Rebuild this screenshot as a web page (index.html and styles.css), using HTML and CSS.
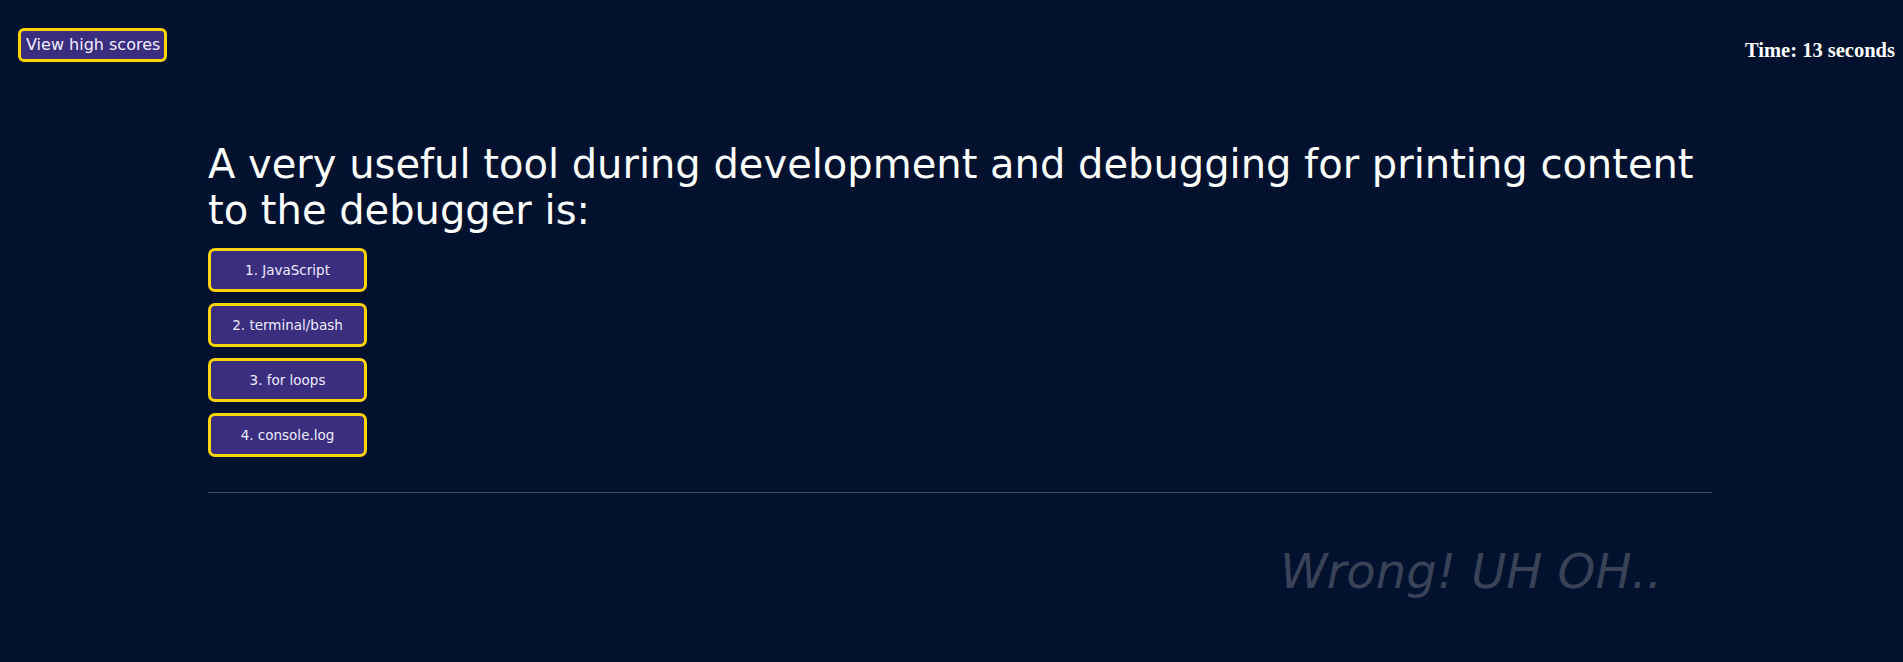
FILE: index.html
```html
<!DOCTYPE html>
<html lang="en">
<head>
<meta charset="utf-8">
<title>Code Quiz</title>
<link rel="stylesheet" href="styles.css">
</head>
<body>
<header class="top-bar">
  <button class="scores-btn">View high scores</button>
  <div class="timer">Time: 13 seconds</div>
</header>
<main class="quiz">
  <h1 class="question">A very useful tool during development and debugging for printing content to the debugger is:</h1>
  <div class="choices">
    <button class="choice">1. JavaScript</button>
    <button class="choice">2. terminal/bash</button>
    <button class="choice">3. for loops</button>
    <button class="choice">4. console.log</button>
  </div>
  <hr class="divider">
  <div class="feedback">
    <p class="feedback-text">Wrong! UH OH..</p>
  </div>
</main>
</body>
</html>
```
FILE: styles.css
```css
html, body {
  background: #01112e;
}
body {
  margin: 8px;
  font-family: "DejaVu Sans", Verdana, sans-serif;
  color: #ffffff;
  overflow: hidden;
}
.top-bar {
  display: flex;
  justify-content: space-between;
  align-items: flex-start;
  padding: 20px 0 0 10px;
}
.scores-btn {
  font-family: "DejaVu Sans", Verdana, sans-serif;
  font-size: 16px;
  line-height: 18px;
  color: #f1efff;
  background: #3b2e7e;
  border: 3px solid #ffd500;
  border-radius: 6px;
  padding: 5px 4px 5px 5px;
  cursor: pointer;
}
.timer {
  flex-shrink: 0;
  font-family: "Liberation Serif", "Times New Roman", serif;
  font-weight: bold;
  font-size: 20.5px;
  line-height: 23px;
  margin-top: 11px;
  white-space: nowrap;
}
.quiz {
  margin: 0 183px 0 200px;
  padding-top: 79px;
}
.question {
  font-size: 40px;
  font-weight: normal;
  line-height: 46px;
  margin: 0 0 15px 0;
}
.choices {
  display: flex;
  flex-direction: column;
  align-items: flex-start;
  gap: 11px;
}
.choice {
  width: 159px;
  font-family: "DejaVu Sans", Verdana, sans-serif;
  font-size: 13.5px;
  line-height: 16px;
  padding: 11px 4px;
  color: #eeecff;
  background: #3b2e7e;
  border: 3px solid #ffd500;
  border-radius: 7px;
  cursor: pointer;
}
.divider {
  border: none;
  border-top: 1px solid #3c4a61;
  margin: 35px 0 0 0;
}
.feedback {
  display: flex;
  justify-content: flex-end;
  padding-right: 50px;
}
.feedback-text {
  font-size: 48px;
  font-style: italic;
  line-height: 56px;
  color: #3a4257;
  margin: 50px 0 0 0;
}
```
